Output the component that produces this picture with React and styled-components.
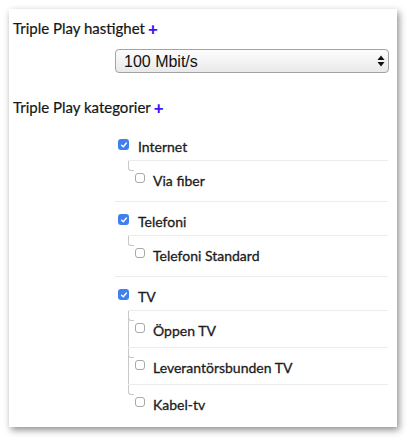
import React from 'react';
import styled, { createGlobalStyle } from 'styled-components';

const GlobalStyle = createGlobalStyle`
	html, body {
		margin: 0;
		padding: 0;
		background: #fff;
	}
	body {
		font-family: "Lato", "Noto Sans", sans-serif;
		color: #222;
	}
`;

const Page = styled.div`
	padding: 9px 13px 14px 9px;
`;

const Card = styled.div`
	width: 388px;
	height: 418px;
	box-sizing: border-box;
	background: #fff;
	box-shadow: 2px 3px 7px rgba(0, 0, 0, 0.45);
	padding: 10px 9px 0 4px;
	overflow: hidden;
`;

const Heading = styled.div`
	font-size: 15px;
	line-height: 18px;
	color: #161616;
	display: flex;
	align-items: center;
	-webkit-text-stroke: 0.2px #161616;
	margin-top: ${props => props.$top || 0}px;
`;

const Plus = styled.span`
	color: #3d14f5;
	font-weight: 900;
	font-size: 17px;
	margin-left: 3px;
	line-height: 1;
	-webkit-text-stroke: 0;
`;

const Field = styled.div`
	margin-left: 102px;
	margin-top: 12px;
	position: relative;
	width: 274px;
`;

const Select = styled.select`
	appearance: none;
	-webkit-appearance: none;
	width: 100%;
	height: 24px;
	box-sizing: border-box;
	border: 1px solid #a3a3a3;
	border-radius: 4px;
	background: linear-gradient(#fdfdfd, #e9e9e9);
	font-family: "Liberation Sans", Arial, sans-serif;
	font-size: 16px;
	color: #111;
	padding: 0 8px;
	outline: none;
	display: block;
`;

const Arrows = styled.svg`
	position: absolute;
	right: 4px;
	top: 6px;
	pointer-events: none;
`;

const Tree = styled.ul`
	list-style: none;
	margin: 11px 0 0 102px;
	padding: 0;
`;

const Group = styled.li`
	border-top: ${props => props.$first ? 'none' : '1px solid #ececec'};
`;

const Row = styled.label`
	display: flex;
	align-items: flex-start;
	height: 33px;
	box-sizing: border-box;
	padding-left: ${props => props.$sub ? 7 : 3}px;
	font-size: 14px;
	line-height: 17px;
	color: #1c1c1c;
	-webkit-text-stroke: 0.3px #1c1c1c;
	gap: ${props => props.$sub ? 8 : 9}px;
`;

const Text = styled.span`
	padding-top: 11px;
`;

const SubList = styled.ul`
	list-style: none;
	margin: 0 0 4px 13px;
	padding: 0;
`;

const SubItem = styled.li`
	position: relative;
	border-top: 1px solid #ececec;
	padding-bottom: 3px;

	&::before {
		content: '';
		position: absolute;
		left: 0;
		top: 0;
		width: 5px;
		height: 9px;
		border-left: 1px solid #c8c8c8;
		border-bottom: 1px solid #c8c8c8;
		border-bottom-left-radius: 3px;
	}

	&::after {
		content: '';
		display: ${props => props.$last ? 'none' : 'block'};
		position: absolute;
		left: 0;
		top: 0;
		bottom: -1px;
		border-left: 1px solid #c8c8c8;
	}
`;

const Box = styled.span`
	width: ${props => props.$checked ? 11 : 10}px;
	height: ${props => props.$checked ? 11 : 10}px;
	box-sizing: border-box;
	border-radius: 3px;
	flex: none;
	display: flex;
	align-items: center;
	justify-content: center;
	background: ${props => props.$checked ? '#3f7ff0' : '#fff'};
	border: ${props => props.$checked ? 'none' : '1px solid #a8a8a8'};
	margin-top: 12px;
`;

function Check({ checked }) {
	return (
		<Box $checked={checked}>
			{checked && (
				<svg width="8" height="8" viewBox="0 0 8 8">
					<path d="M1.6 4.2 L3.3 5.8 L6.4 2" fill="none" stroke="#fff" strokeWidth="1.4" strokeLinecap="round" strokeLinejoin="round" />
				</svg>
			)}
		</Box>
	);
}

const groups = [
	{ name: 'Internet', items: ['Via fiber'] },
	{ name: 'Telefoni', items: ['Telefoni Standard'] },
	{ name: 'TV', items: ['Öppen TV', 'Leverantörsbunden TV', 'Kabel-tv'] },
];

export default function App() {
	return (
		<Page>
			<GlobalStyle />
			<Card>
				<Heading>Triple Play hastighet<Plus>+</Plus></Heading>
				<Field>
					<Select defaultValue="100">
						<option value="100">100 Mbit/s</option>
						<option value="250">250 Mbit/s</option>
						<option value="1000">1000 Mbit/s</option>
					</Select>
					<Arrows width="8" height="12" viewBox="0 0 8 12">
						<path d="M4 0.5 L7.5 5 L0.5 5 Z" fill="#111" />
						<path d="M4 11.5 L7.5 7 L0.5 7 Z" fill="#111" />
					</Arrows>
				</Field>
				<Heading $top={25}>Triple Play kategorier<Plus>+</Plus></Heading>
				<Tree>
					{groups.map((g, gi) => (
						<Group key={g.name} $first={gi === 0}>
							<Row><Check checked /><Text>{g.name}</Text></Row>
							<SubList>
								{g.items.map((it, i) => (
									<SubItem key={it} $last={i === g.items.length - 1}>
										<Row $sub><Check /><Text>{it}</Text></Row>
									</SubItem>
								))}
							</SubList>
						</Group>
					))}
				</Tree>
			</Card>
		</Page>
	);
}
